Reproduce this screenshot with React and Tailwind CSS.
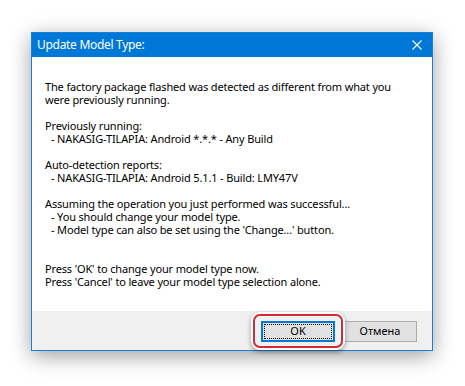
import React from "react";

const lines = [
    { text: "The factory package flashed was detected as different from what you" },
    { text: "were previously running." },
    { text: "" },
    { text: "Previously running:" },
    { text: "- NAKASIG-TILAPIA: Android *.*.* - Any Build", indent: true },
    { text: "" },
    { text: "Auto-detection reports:" },
    { text: "- NAKASIG-TILAPIA: Android 5.1.1 - Build: LMY47V", indent: true },
    { text: "" },
    { text: "Assuming the operation you just performed was successful..." },
    { text: "- You should change your model type.", indent: true },
    { text: "- Model type can also be set using the 'Change...' button.", indent: true },
    { text: "" },
    { text: "" },
    { text: "Press 'OK' to change your model type now." },
    { text: "Press 'Cancel' to leave your model type selection alone." },
];

const App = () => {
    // dialog sits on a plain white canvas, offsets match the screenshot
    return (
        <div
            className="h-[386px] w-[465px] overflow-hidden bg-white pl-[31px] pt-[32px]"
            style={{ fontFamily: '"Noto Sans", "Open Sans", sans-serif' }}
        >
            <div className="w-[402px] border border-[#1a7fd4] shadow-[0_5px_20px_rgba(0,0,0,0.38)]">
                {/* title bar */}
                <div className="flex h-[24px] items-center justify-between bg-[#0078d7] pl-[5px] pr-[10px] text-[12px] tracking-[-0.3px] text-white">
                    <span>Update Model Type:</span>
                    <svg width="10" height="10" viewBox="0 0 10 10">
                        <path d="M0.5 0.5 L9.5 9.5 M9.5 0.5 L0.5 9.5" stroke="white" strokeWidth="1.1" />
                    </svg>
                </div>

                {/* message */}
                <div className="h-[254px] bg-white pl-[13px] pt-[23px] text-[11px] leading-[13px] tracking-[-0.15px] text-black">
                    {lines.map((l, i) => (
                        <div key={i} className={`h-[13px] whitespace-nowrap ${l.indent ? "pl-[6px]" : ""}`}>
                            {l.text}
                        </div>
                    ))}
                </div>

                {/* buttons */}
                <div className="flex h-[39px] items-center justify-end gap-[8px] bg-[#f0f0f0] pr-[15px] pt-[1px] text-[11px]">
                    <div className="relative">
                        <div className="absolute -bottom-[6px] -left-[8px] -right-[8px] -top-[7px] rounded-[7px] border-2 border-[#d42a36] shadow-[0_0_0_2px_#ffffff,0_2px_5px_2px_rgba(0,0,0,0.35),inset_0_0_0_1px_#ffffff]" />
                        <button className="flex h-[21px] w-[74px] items-center justify-center border-2 border-[#0078d7] bg-[#e1e1e1] p-[1px] text-black">
                            <span className="flex h-full w-full items-center justify-center border border-dotted border-black">
                                OK
                            </span>
                        </button>
                    </div>
                    <button className="flex h-[21px] w-[74px] items-center justify-center border border-[#adadad] bg-[#e1e1e1] text-black">
                        Отмена
                    </button>
                </div>
            </div>
        </div>
    );
};

export default App;
